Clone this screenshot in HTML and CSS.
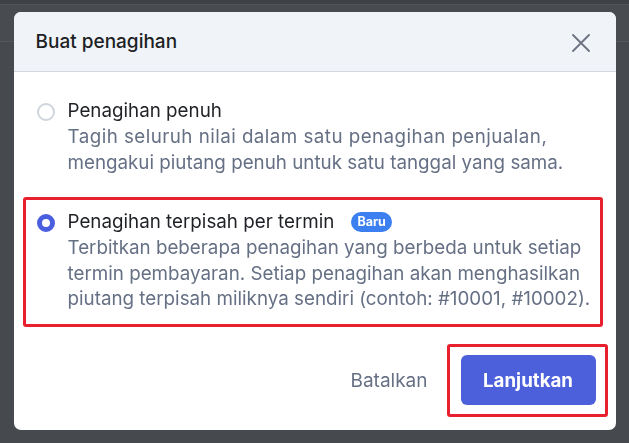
FILE: index.html
```html
<!DOCTYPE html>
<html lang="id">
<head>
<meta charset="utf-8">
<title>Buat penagihan</title>
<link rel="stylesheet" href="styles.css">
</head>
<body>
<div class="page">
  <div class="page-top"></div>
  <div class="page-bar"></div>
</div>
<div class="overlay">
  <div class="modal" role="dialog">
    <div class="modal-header">
      <h2 class="modal-title">Buat penagihan</h2>
      <button class="close" aria-label="Tutup">
        <svg width="18" height="18" viewBox="0 0 18 18"><path d="M1 1 L17 17 M17 1 L1 17" stroke="#6b7280" stroke-width="1.8" stroke-linecap="round" fill="none"/></svg>
      </button>
    </div>
    <div class="modal-body">
      <label class="option">
        <span class="radio"></span>
        <span class="option-text">
          <span class="option-title">Penagihan penuh</span>
          <span class="option-desc"><span class="desc-loose">Tagih seluruh nilai dalam satu penagihan penjualan,</span><br>mengakui piutang penuh untuk satu tanggal yang sama.</span>
        </span>
      </label>
      <label class="option option-marked">
        <span class="radio radio-checked"></span>
        <span class="option-text">
          <span class="option-title">Penagihan terpisah per termin <span class="badge">Baru</span></span>
          <span class="option-desc">Terbitkan beberapa penagihan yang berbeda untuk setiap<br>termin pembayaran. Setiap penagihan akan menghasilkan<br>piutang terpisah miliknya sendiri (contoh: #10001, #10002).</span>
        </span>
      </label>
    </div>
    <div class="modal-footer">
      <button class="btn-cancel">Batalkan</button>
      <div class="marked-wrap">
        <button class="btn-primary">Lanjutkan</button>
      </div>
    </div>
  </div>
</div>
</body>
</html>
```
FILE: styles.css
```css
* { box-sizing: border-box; }
html, body { margin: 0; height: 100%; }
body {
  background: #46494e;
  font-family: Inter, "Noto Sans", sans-serif;
  overflow: hidden;
}
.page-top {
  height: 5px;
  background: #3e4146;
  border-bottom: 1px solid #4f5257;
}
.page-bar {
  height: 37px;
  background: #484b50;
  border-bottom: 1px solid #54575c;
}
.overlay {
  position: fixed;
  inset: 0;
  display: flex;
  justify-content: center;
  align-items: flex-start;
  padding-top: 12px;
}
.modal {
  width: 602px;
  height: 418px;
  background: #fff;
  border-radius: 7px;
  overflow: hidden;
  display: flex;
  flex-direction: column;
}
.modal-header {
  height: 60px;
  flex: none;
  background: #f0f3f8;
  border-bottom: 1px solid #d3d7de;
  display: flex;
  align-items: center;
  justify-content: space-between;
  padding: 0 26px 0 22px;
}
.modal-title {
  margin: 0;
  font-size: 19px;
  font-weight: 500;
  color: #1d1f24;
}
.close {
  border: 0;
  background: none;
  padding: 0;
  width: 18px;
  height: 18px;
  display: flex;
  margin-top: 2px;
}
.modal-body {
  padding: 14px 13px 0 9px;
  display: flex;
  flex-direction: column;
  gap: 7px;
}
.option {
  display: flex;
  align-items: flex-start;
  gap: 13px;
  border: 3px solid transparent;
  border-radius: 3px;
  padding: 9px 2px 12px 11px;
}
.option-marked { border-color: #e8202e; }
.radio {
  flex: none;
  width: 18px;
  height: 18px;
  border-radius: 50%;
  border: 2px solid #d0d5dd;
  margin-top: 5px;
  background: #fff;
}
.radio-checked {
  border: 5px solid #4a5ee0;
}
.option-text { display: flex; flex-direction: column; min-width: 0; }
.option-title {
  font-size: 18.8px;
  line-height: 26px;
  color: #1f2126;
  display: flex;
  align-items: center;
}
.option-desc {
  font-size: 18.8px;
  line-height: 25.5px;
  color: #667085;
  white-space: nowrap;
}
.desc-loose { letter-spacing: 0.45px; }
.badge {
  margin-left: 17px;
  background: #3b7ff0;
  color: #fff;
  font-size: 12.5px;
  font-weight: 700;
  line-height: 20px;
  height: 20px;
  padding: 0 6px;
  border-radius: 10px;
}
.modal-footer {
  margin-top: auto;
  display: flex;
  justify-content: flex-end;
  align-items: center;
  padding: 0 8px 13px 0;
}
.btn-cancel {
  border: 0;
  background: none;
  font-family: inherit;
  font-size: 19px;
  color: #667085;
  padding: 0;
  margin-right: 19px;
}
.marked-wrap {
  border: 3px solid #e8202e;
  border-radius: 3px;
  padding: 8px 9px 9px 11px;
}
.btn-primary {
  display: block;
  width: 135px;
  height: 50px;
  border: 0;
  border-radius: 6px;
  background: #4c60dc;
  color: #fff;
  font-family: inherit;
  font-size: 18.7px;
  font-weight: 700;
}
```
